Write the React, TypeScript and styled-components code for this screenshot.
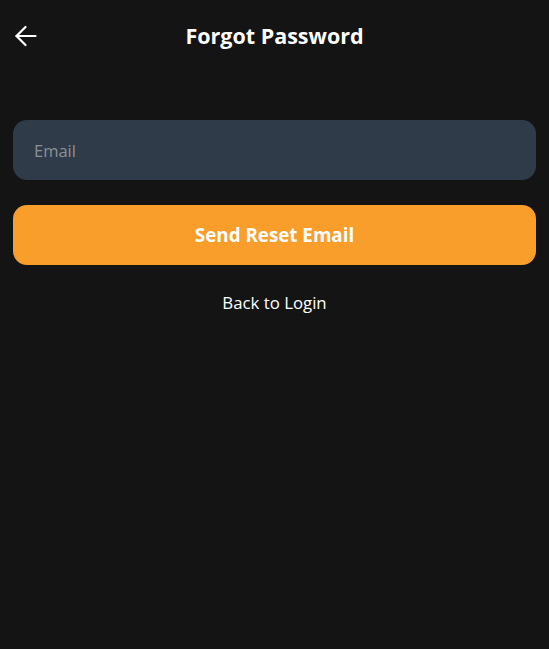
import React from 'react'
import styled, { createGlobalStyle } from 'styled-components'

const GlobalStyle = createGlobalStyle`
    html, body {
        margin: 0;
        padding: 0;
        background: #141414;
        font-family: "Open Sans", "Noto Sans", sans-serif;
    }
    * {
        box-sizing: border-box;
    }
`
const Screen = styled.div`
    display: flex;
    flex-direction: column;
    min-height: 649px;
    background: #141414;
    padding: 0 13px;
`
const Header = styled.div`
    display: grid;
    grid-template-columns: 40px 1fr 40px;
    align-items: center;
    height: 72px;
`
const BackButton = styled.button`
    display: flex;
    align-items: center;
    justify-content: flex-start;
    background: none;
    border: none;
    padding: 0 0 0 2px;
    color: #ffffff;
    cursor: pointer;
`
const Title = styled.h1`
    margin: 0 0 1px;
    text-align: center;
    color: #ffffff;
    font-size: 21.5px;
    font-weight: 700;
`
const Form = styled.div`
    display: flex;
    flex-direction: column;
    gap: 25px;
    margin-top: 48px;
`
const Input = styled.input`
    height: 60px;
    width: 100%;
    border: none;
    outline: none;
    border-radius: 14px;
    background: #2f3b48;
    padding: 0 20px 0 21px;
    color: #ffffff;
    font-family: inherit;
    font-size: 16.5px;
    &::placeholder {
        color: #8c9199;
    }
`
const PrimaryButton = styled.button`
    height: 60px;
    width: 100%;
    border: none;
    border-radius: 14px;
    background: #f99d2b;
    color: #ffffff;
    font-family: inherit;
    font-size: 18.8px;
    font-weight: 700;
    cursor: pointer;
`
const LinkButton = styled.button`
    align-self: center;
    margin-top: -3px;
    background: none;
    border: none;
    padding: 4px 8px;
    color: #ffffff;
    font-family: inherit;
    font-size: 16.8px;
    cursor: pointer;
`

const ArrowLeft = () => (
    <svg width="22" height="22" viewBox="0 0 22 22" fill="none" stroke="currentColor" strokeWidth="2.2" strokeLinecap="round" strokeLinejoin="round">
        <path d="M20.5 11H1.5" />
        <path d="M10.5 2L1.5 11L10.5 20" />
    </svg>
)

const App = () => {
  return (
    <>
    <GlobalStyle />
    <Screen>
        <Header>
            <BackButton aria-label="Back">
                <ArrowLeft />
            </BackButton>
            <Title>Forgot Password</Title>
            <span />
        </Header>
        <Form>
            <Input type="email" placeholder="Email" />
            <PrimaryButton>Send Reset Email</PrimaryButton>
            <LinkButton>Back to Login</LinkButton>
        </Form>
    </Screen>
    </>
  )
}

export default App
